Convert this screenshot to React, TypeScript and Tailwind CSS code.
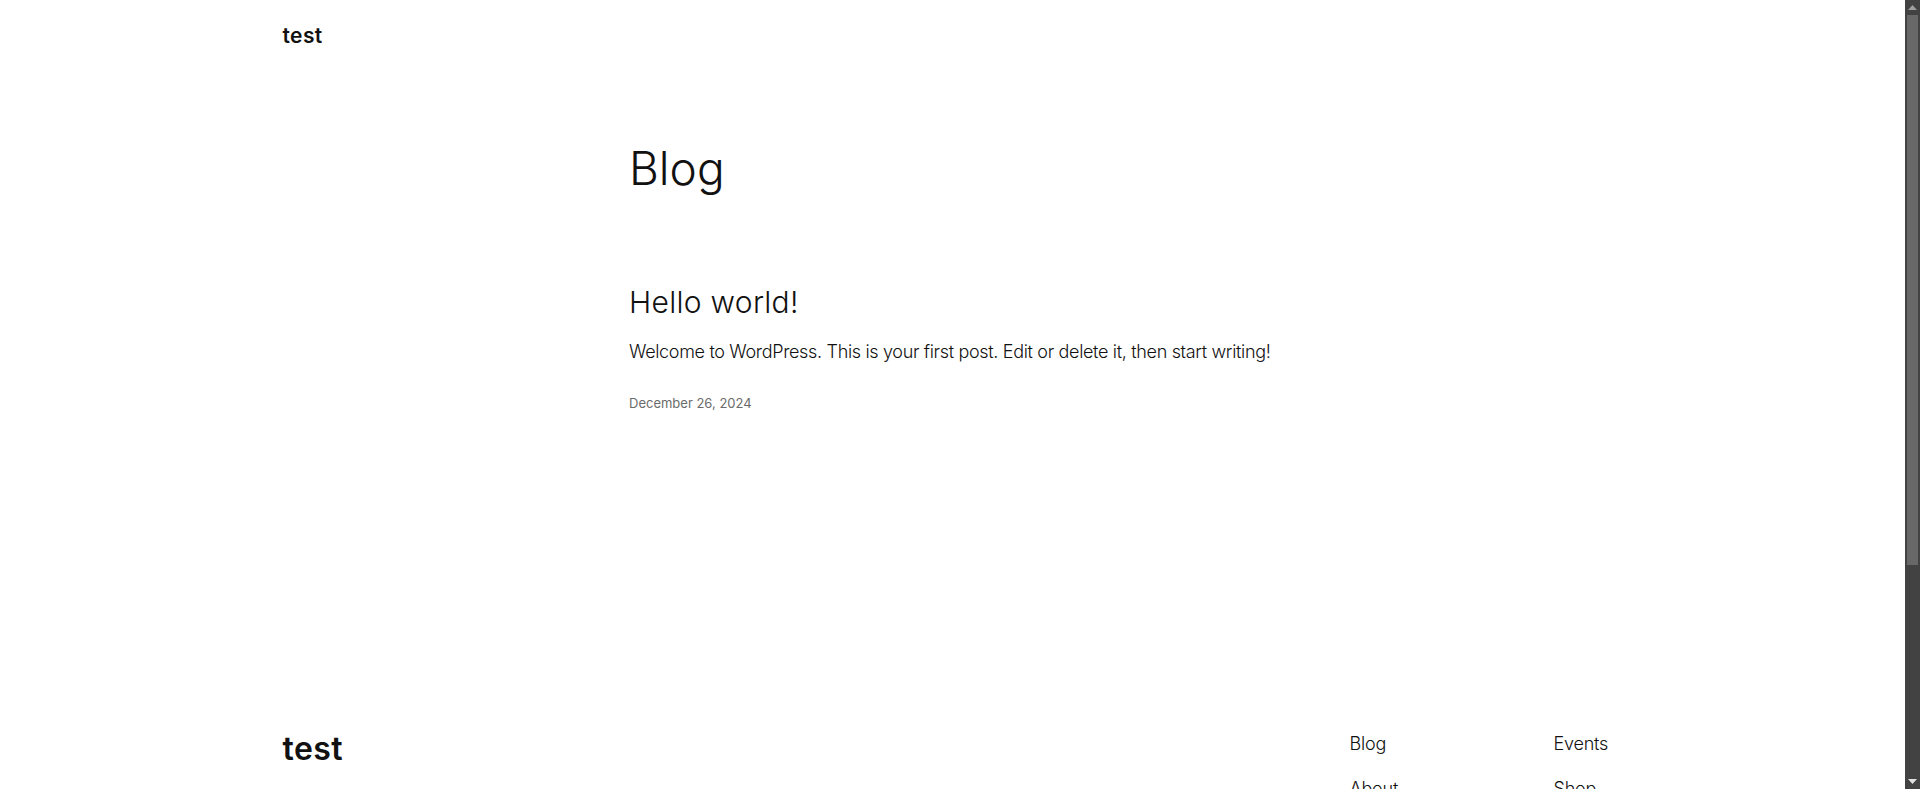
import React from "react";

const font = { fontFamily: "Inter, 'Noto Sans', 'Liberation Sans', sans-serif" };

function Scrollbar() {
  return (
    <div className="flex h-full w-[15px] shrink-0 flex-col bg-[#424242]">
      <div className="flex h-[15px] items-center justify-center">
        <svg width="9" height="5" viewBox="0 0 9 5">
          <path d="M0 5 L4.5 0 L9 5 Z" fill="#9e9e9e" />
        </svg>
      </div>
      <div className="mx-[2px] h-[550px] bg-[#686868]" />
      <div className="flex-1" />
      <div className="flex h-[15px] items-center justify-center">
        <svg width="9" height="5" viewBox="0 0 9 5">
          <path d="M0 0 L4.5 5 L9 0 Z" fill="#e0e0e0" />
        </svg>
      </div>
    </div>
  );
}

export default function App() {
  return (
    <div style={font} className="flex h-screen w-full overflow-hidden bg-white text-[#111111]">
      <div className="min-w-0 flex-1 overflow-hidden">
        <header className="mx-auto w-[1340px] pt-[22px]">
          <p className="text-[21px] font-semibold leading-[28px] tracking-[0.4px]">test</p>
        </header>

        <main className="mx-auto w-[647px]">
          <h1 className="mt-[93px] text-[46px] font-light leading-[50px] tracking-[0px]">Blog</h1>
          <h2 className="mt-[91px] text-[30px] font-light leading-[36px] tracking-[0.3px]">Hello world!</h2>
          <p className="mt-[18px] whitespace-nowrap text-[18px] font-light leading-[27px] tracking-[-0.33px]">
            Welcome to WordPress. This is your first post. Edit or delete it, then start writing!
          </p>
          <p className="mt-[28px] text-[13px] leading-[20px] text-[#6b6b6b]">December 26, 2024</p>
        </main>

        <footer className="mx-auto mt-[318px] w-[1340px] pb-[120px]">
          <div className="flex items-start">
            <p className="text-[32px] font-semibold leading-[36px] tracking-[0.4px]">test</p>
            <nav className="ml-auto mt-[-1px] flex text-[18px] font-light leading-[27px] tracking-[-0.2px]">
              <ul className="flex w-[204px] flex-col gap-[18px]">
                <li>Blog</li>
                <li>About</li>
                <li>FAQs</li>
                <li>Authors</li>
              </ul>
              <ul className="flex w-[69px] flex-col gap-[18px]">
                <li>Events</li>
                <li>Shop</li>
                <li>Patterns</li>
                <li>Themes</li>
              </ul>
            </nav>
          </div>
          <div className="mt-[70px] flex justify-between text-[14px] text-[#111111]">
            <span>Twenty Twenty-Four</span>
            <span>Designed with WordPress</span>
          </div>
        </footer>
      </div>
      <Scrollbar />
    </div>
  );
}
